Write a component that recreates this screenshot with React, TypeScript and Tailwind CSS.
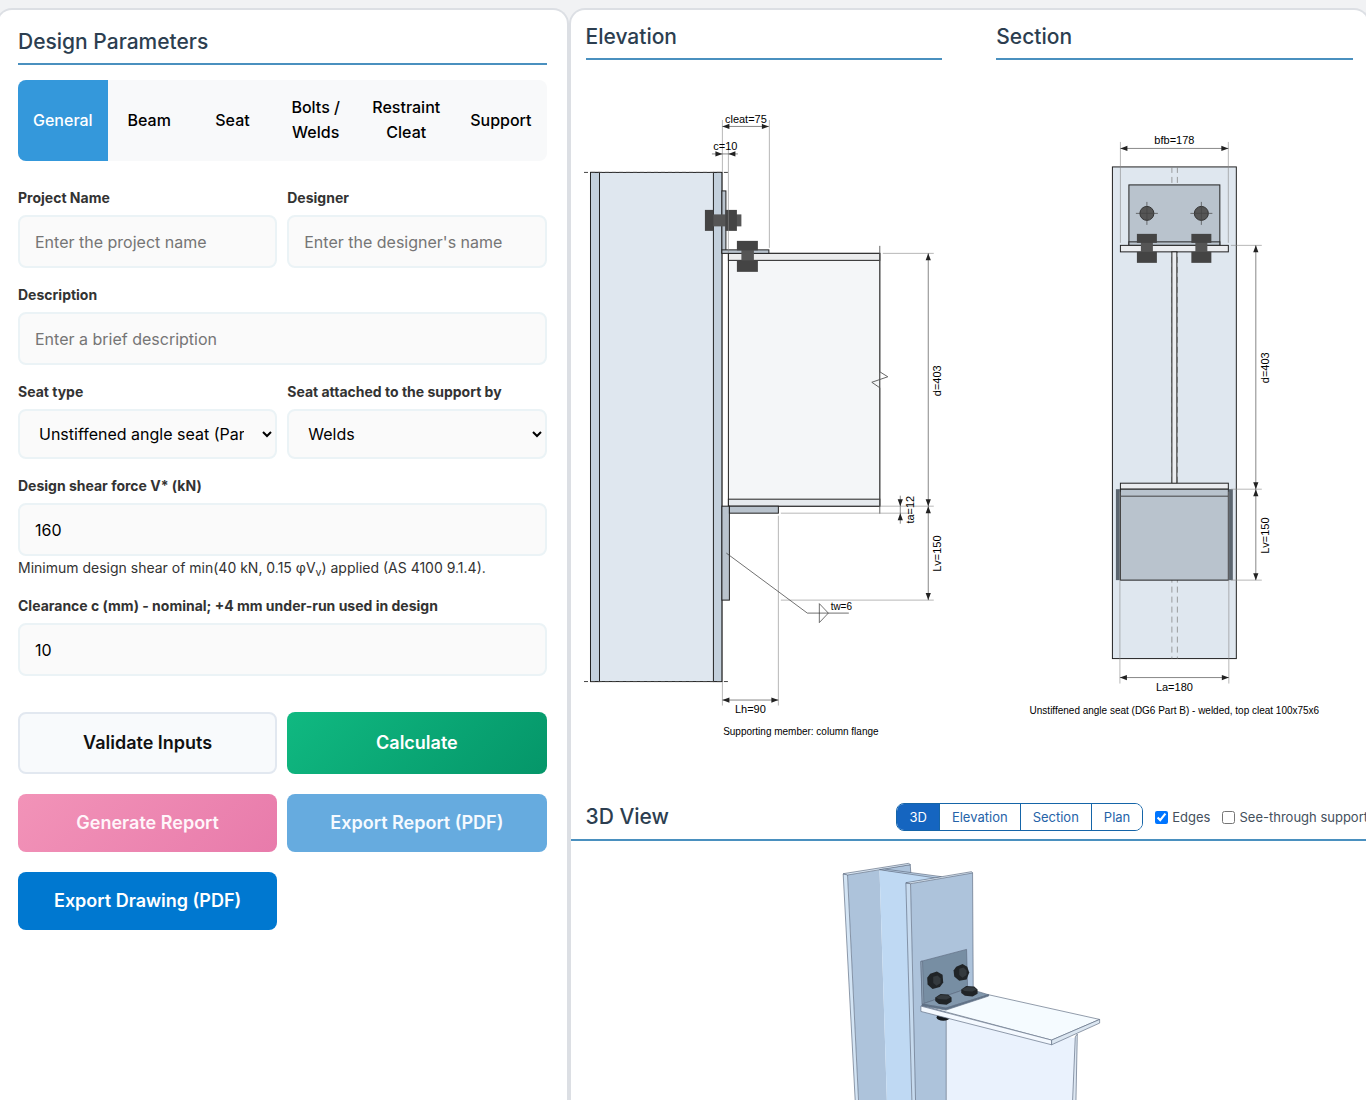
import React, { useState } from 'react';

type DimProps = {
  from: number;
  to: number;
  at: number;
  vertical?: boolean;
};

const tabs = ['General', 'Beam', 'Seat', 'Bolts / Welds', 'Restraint Cleat', 'Support'];
const views = ['3D', 'Elevation', 'Section', 'Plan'];

const inputClass =
  'w-full h-[53px] rounded-lg border-2 border-[#ebf3f6] bg-[#fafafa] px-[15px] text-base text-black placeholder:text-[#757575] outline-none';
const selectClass =
  'w-full h-[50px] rounded-lg border-2 border-[#ebf3f6] bg-[#fafafa] px-[15px] text-base text-black outline-none';
const buttonClass = 'rounded-lg px-4 py-[15px] text-lg leading-7 font-semibold';

// Dimension line with inward filled arrow heads
const Dim: React.FC<DimProps> = ({ from, to, at, vertical }) => (
  <g>
    {vertical ? (
      <>
        <path d={`M${at} ${from}V${to}`} stroke="#555" strokeWidth="0.7" />
        <path
          d={`M${at} ${from}l-2.6 7h5.2zM${at} ${to}l-2.6 -7h5.2z`}
          fill="#222"
        />
      </>
    ) : (
      <>
        <path d={`M${from} ${at}H${to}`} stroke="#555" strokeWidth="0.7" />
        <path
          d={`M${from} ${at}l7 -2.6v5.2zM${to} ${at}l-7 -2.6v5.2z`}
          fill="#222"
        />
      </>
    )}
  </g>
);

const Field: React.FC<{ id: string; label: string; className?: string; children: React.ReactNode }> = ({
  id,
  label,
  className,
  children
}) => (
  <div className={className}>
    <label htmlFor={id} className="mb-[7px] block text-sm leading-5 font-bold text-[#333]">
      {label}
    </label>
    {children}
  </div>
);

const ElevationDrawing: React.FC = () => (
  <svg
    viewBox="586 60 357 720"
    className="block w-full overflow-visible"
    fontFamily="'Liberation Sans', Arial, sans-serif"
    fontSize="11"
    textAnchor="middle"
    role="img"
    aria-label="Elevation"
  >
    {/* Column */}
    <g stroke="#222" strokeWidth="1">
      <rect x="590.5" y="172.5" width="131.5" height="509.5" fill="#dfe7ef" />
      <rect x="590.5" y="172.5" width="9" height="509.5" fill="#c3d0dc" />
      <rect x="713.5" y="172.5" width="8.5" height="509.5" fill="#c3d0dc" />
      <path d="M584 172.5H728M584 682H728" stroke="#444" strokeDasharray="4 3" fill="none" />
    </g>
    {/* Beam */}
    <g stroke="#222" strokeWidth="1">
      <rect x="728.5" y="253.5" width="151.5" height="253" fill="#f4f6f8" />
      <rect x="728.5" y="253.5" width="151.5" height="7" fill="#ebeced" />
      <rect x="728.5" y="499.5" width="151.5" height="7" fill="#e6eaee" />
    </g>
    <path d="M880 246V372L888 377L872 382.5L880 388V514" fill="none" stroke="#555" strokeWidth="0.9" />
    {/* Seat angle and top cleat */}
    <g stroke="#222" strokeWidth="1" fill="#b9c3cd">
      <rect x="722" y="506.5" width="7.5" height="94" />
      <rect x="729.5" y="506.5" width="49" height="7" />
      <rect x="722" y="191" width="4" height="62" />
      <rect x="722" y="250" width="47" height="3.5" />
    </g>
    <g fill="#444">
      <rect x="713" y="214.5" width="28.5" height="12" fill="#555" />
      <rect x="705" y="210" width="8.5" height="21" />
      <rect x="725.5" y="210" width="11.5" height="21" />
      <rect x="741.5" y="245" width="12.5" height="20" fill="#555" />
      <rect x="737" y="241" width="21" height="9.5" />
      <rect x="737" y="260.5" width="21" height="11.5" />
    </g>
    <g fill="none" stroke="#888" strokeWidth="0.6">
      <path d="M722.5 120V172M769.5 120V248M728.5 148V253" />
      <path d="M883 253.5H934M880 506.5H934M781 513.5H913M781 600.5H934" />
      <path d="M722.5 682V706M778.5 516V706" />
    </g>
    <Dim from={722.5} to={769} at={126.5} />
    <Dim from={722.5} to={778.5} at={700.5} />
    <Dim from={253.5} to={506.5} at={928.5} vertical />
    <Dim from={506.5} to={600.5} at={928.5} vertical />
    <path d="M712 154H738M900.5 496V524" stroke="#555" strokeWidth="0.7" />
    <path
      d="M722.5 154l-7 -2.6v5.2zM728.5 154l7 -2.6v5.2zM900.5 506.5l-2.6 -7h5.2zM900.5 513.5l-2.6 7h5.2z"
      fill="#222"
    />
    <path d="M726.5 553.5L807.5 613.5H849" fill="none" stroke="#333" strokeWidth="0.7" />
    <path d="M819.5 604L828.5 613.5L819.5 623Z" fill="none" stroke="#333" strokeWidth="0.7" />
    <text x="746" y="123">cleat=75</text>
    <text x="725.5" y="150">c=10</text>
    <text x="750.5" y="713">Lh=90</text>
    <text transform="translate(941 381) rotate(-90)">d=403</text>
    <text transform="translate(914 510) rotate(-90)">ta=12</text>
    <text transform="translate(941 554) rotate(-90)">Lv=150</text>
    <text x="841.5" y="610" fontSize="10">tw=6</text>
    <text x="801" y="735" fontSize="10">Supporting member: column flange</text>
  </svg>
);

const FlangeBolt: React.FC<{ x: number }> = ({ x }) => (
  <g fill="#444">
    <rect x={x - 6} y="238" width="12" height="20" fill="#555" />
    <rect x={x - 10} y="234" width="20" height="9" />
    <rect x={x - 10} y="252" width="20" height="11" />
    <circle cx={x} cy="213.5" r="7" fill="#555" stroke="#333" />
    <path d={`M${x - 11} 213.5H${x + 11}M${x} 202V225`} stroke="#444" strokeWidth="0.7" />
  </g>
);

const SectionDrawing: React.FC = () => (
  <svg
    viewBox="996 60 357 720"
    className="block w-full overflow-visible"
    fontFamily="'Liberation Sans', Arial, sans-serif"
    fontSize="11"
    textAnchor="middle"
    role="img"
    aria-label="Section"
  >
    <rect x="1112.5" y="167" width="124" height="492" fill="#dfe7ef" stroke="#222" />
    <path d="M1172 167V659M1177.5 167V659" stroke="#888" strokeWidth="0.8" strokeDasharray="6 4" />
    <g stroke="#222" strokeWidth="1">
      <rect x="1129" y="185" width="91" height="60" fill="#b9c3cd" />
      <rect x="1129" y="242" width="91" height="3.5" fill="#b9c3cd" />
      <rect x="1120.5" y="245.5" width="108" height="6.5" fill="#ebedf0" />
      <rect x="1172" y="252" width="5" height="232" fill="#ebedf0" />
      <rect x="1120.5" y="483.5" width="108" height="6" fill="#ebedf0" />
      <rect x="1120.5" y="489.5" width="108" height="91" fill="#b9c3cd" />
      <path d="M1120.5 496.5H1228.5" stroke="#444" />
    </g>
    <rect x="1116" y="489.5" width="4" height="91" fill="#5b656f" />
    <rect x="1229" y="489.5" width="4" height="91" fill="#5b656f" />
    <FlangeBolt x={1147} />
    <FlangeBolt x={1201.5} />
    <g fill="none" stroke="#888" strokeWidth="0.6">
      <path d="M1120.5 142V243M1228.5 142V243" />
      <path d="M1231 245.5H1262M1231 489.5H1262M1231 580.5H1262" />
      <path d="M1120 492V684M1229 492V684" />
    </g>
    <Dim from={1120.5} to={1228.5} at={148.5} />
    <Dim from={1120} to={1229} at={678} />
    <Dim from={245.5} to={489.5} at={1256} vertical />
    <Dim from={489.5} to={580.5} at={1256} vertical />
    <text x="1174.5" y="144">bfb=178</text>
    <text x="1174.5" y="691">La=180</text>
    <text transform="translate(1269 368) rotate(-90)">d=403</text>
    <text transform="translate(1269 536) rotate(-90)">Lv=150</text>
    <text x="1174.5" y="714" fontSize="10">
      Unstiffened angle seat (DG6 Part B) - welded, top cleat 100x75x6
    </text>
  </svg>
);

const ModelView: React.FC = () => (
  <svg viewBox="571 841 797 340" className="block w-full" role="img" aria-label="3D model">
    <g
      transform="translate(830 850) scale(0.3333)"
      stroke="#5d6b80"
      strokeWidth="2"
      strokeLinejoin="round"
    >
      {/* Column: back flange, web, front flange */}
      <path d="M148 58L240 44L242 70L200 70Z" fill="#adc3db" />
      <path d="M52 74L148 60L170 750L174 960H93L85 750Z" fill="#adc3db" stroke="none" />
      <path d="M39 72L52 74L85 750L93 960H83L75 750Z" fill="#d3e4f4" />
      <path d="M39 71L235 40L241 44L52 75Z" fill="#dbe8f5" />
      <path d="M148 60L325 84L228 100L250 960H174L170 750Z" fill="#bfd9f3" stroke="none" />
      <path d="M148 59L162 57L334 80L318 84Z" fill="#b9cfe6" />
      <path d="M241 101L427 68L429 425L348 480V960H260Z" fill="#adc3db" stroke="none" />
      <path d="M427 68L429 425" fill="none" />
      <path d="M227 99L241 101L256 750L260 960H250L245 750Z" fill="#c6daee" />
      <path d="M227 98L424 65L427 69L241 101Z" fill="#dbe8f5" />
      {/* Beam */}
      <path d="M348 500L742 565L736 750V960H348Z" fill="#eaf2fd" stroke="none" />
      <path d="M348 504V960" fill="none" />
      <path d="M735 560L741 552L737 750V960H727V750Z" fill="#dde7f2" />
      <ellipse cx="339" cy="502" rx="20" ry="10" fill="#15191d" stroke="none" />
      <path d="M274 466L475 434L808 508L664 570Z" fill="#f5fbff" />
      <path d="M272 468L664 570V584L272 484Z" fill="#f4f9ff" />
      <path d="M664 570L808 508V519L664 584Z" fill="#dbe6f1" />
      {/* Top cleat */}
      <path d="M272 334L409 298L412 415L276 462Z" fill="#778ea3" />
      <path d="M276 462L412 415L475 434L347 474Z" fill="#8298ad" />
      <path d="M276 462L347 474L475 434V438L347 480L276 467Z" fill="#5f7489" />
      <path d="M272 334L277 333L281 461L276 462Z" fill="#94a9bd" />
    </g>
    <g transform="translate(830 850) scale(0.3333)" fill="#202427">
      <path d="M300 371L320 364L337 374L339 397L329 411L307 417L292 403L291 383Z" />
      <path d="M309 380l13 -4l9 9v14l-12 8l-10 -8z" fill="#343a3e" />
      <path d="M378 350L397 342L411 350L417 367L409 388L387 392L372 379L370 361Z" />
      <path d="M387 356l13 -4l9 9v14l-12 8l-10 -8z" fill="#343a3e" />
      <path d="M315 442L331 432L354 433L364 442V455L349 464L326 462L315 453Z" />
      <path d="M317 442l15 -7l22 1l8 6l-14 6l-23 -1z" fill="#343a3e" />
      <path d="M393 418L408 408L432 409L442 418V431L427 439L404 437L393 429Z" />
      <path d="M395 418l15 -7l22 1l8 6l-14 6l-23 -1z" fill="#343a3e" />
    </g>
  </svg>
);

const App: React.FC = () => {
  const [activeTab, setActiveTab] = useState('General');
  const [activeView, setActiveView] = useState('3D');

  return (
    <div className="h-screen overflow-hidden bg-[#f1f2f4] pt-2 font-[Inter,sans-serif]">
      <div className="-mx-1 grid h-full grid-cols-[5fr_7fr]">
        <section className="min-w-0 rounded-t-2xl border-2 border-b-0 border-[#dcdfe4] bg-white px-5 pt-[17px]">
          <h2 className="border-b-2 border-[#4a90bf] pb-[7px] text-[21px] leading-[29px] font-medium text-[#2c3e50]">
            Design Parameters
          </h2>

          <div className="mt-[15px] flex overflow-hidden rounded-lg bg-[#f8f9fa]" role="tablist">
            {tabs.map((tab) => (
              <button
                key={tab}
                type="button"
                role="tab"
                aria-selected={activeTab === tab}
                onClick={() => setActiveTab(tab)}
                className={`flex-1 px-[15px] pt-[15px] pb-4 text-base leading-[25px] font-medium ${
                  activeTab === tab ? 'bg-[#3498db] text-white' : 'text-black'
                }`}
              >
                {tab}
              </button>
            ))}
          </div>

          <form className="mt-[27px]" onSubmit={(e) => e.preventDefault()}>
            <div className="grid grid-cols-2 gap-x-[10px] gap-y-[17px]">
              <Field id="project" label="Project Name">
                <input id="project" className={inputClass} placeholder="Enter the project name" />
              </Field>
              <Field id="designer" label="Designer">
                <input id="designer" className={inputClass} placeholder="Enter the designer's name" />
              </Field>
              <Field id="description" label="Description" className="col-span-2">
                <input id="description" className={inputClass} placeholder="Enter a brief description" />
              </Field>
              <Field id="seat-type" label="Seat type">
                <select id="seat-type" className={selectClass}>
                  <option>Unstiffened angle seat (Part B)</option>
                </select>
              </Field>
              <Field id="attached" label="Seat attached to the support by">
                <select id="attached" className={selectClass}>
                  <option>Welds</option>
                  <option>Bolts</option>
                </select>
              </Field>
              <Field id="shear" label="Design shear force V* (kN)" className="col-span-2">
                <input id="shear" className={inputClass} defaultValue="160" />
                <p className="h-[23px] text-sm leading-6 text-[#333]">
                  Minimum design shear of min(40 kN, 0.15 φV<sub>v</sub>) applied (AS 4100 9.1.4).
                </p>
              </Field>
              <Field id="clearance" label="Clearance c (mm) - nominal; +4 mm under-run used in design" className="col-span-2">
                <input id="clearance" className={inputClass} defaultValue="10" />
              </Field>
            </div>

            <div className="mt-9 grid grid-cols-2 gap-x-[10px] gap-y-5">
              <button type="button" className={`${buttonClass} border-2 border-[#e2e8f0] bg-[#f8fafc] text-[#111]`}>
                Validate Inputs
              </button>
              <button type="submit" className={`${buttonClass} bg-linear-135 from-[#10b981] to-[#059669] text-white`}>
                Calculate
              </button>
              <button type="button" className={`${buttonClass} bg-linear-135 from-[#f293b8] to-[#e87bab] text-[#fff5fa]`}>
                Generate Report
              </button>
              <button type="button" className={`${buttonClass} bg-[#66abdf] text-[#f5faff]`}>
                Export Report (PDF)
              </button>
              <button type="button" className={`${buttonClass} bg-[#0078d0] text-white`}>
                Export Drawing (PDF)
              </button>
            </div>
          </form>
        </section>

        <section className="min-w-0 rounded-t-2xl border-2 border-b-0 border-[#dcdfe4] bg-white pt-[13px]">
          <div className="grid grid-cols-2 gap-x-[54px] px-[15px]">
            <div>
              <h2 className="border-b-2 border-[#4a90bf] pb-[7px] text-[21px] leading-7 font-medium text-[#2c3e50]">
                Elevation
              </h2>
              <ElevationDrawing />
            </div>
            <div>
              <h2 className="border-b-2 border-[#4a90bf] pb-[7px] text-[21px] leading-7 font-medium text-[#2c3e50]">
                Section
              </h2>
              <SectionDrawing />
            </div>
          </div>

          <div className="mt-6 flex items-center border-b-2 border-[#4a90bf] pb-2 pl-[15px] whitespace-nowrap">
            <h2 className="mr-auto text-[21px] leading-7 font-medium text-[#2c3e50]">3D View</h2>
            <div className="mr-3 flex divide-x divide-[#1565a8] overflow-hidden rounded-lg border border-[#1565a8]">
              {views.map((view) => (
                <button
                  key={view}
                  type="button"
                  onClick={() => setActiveView(view)}
                  className={`px-3 py-1 text-[13px] leading-[18px] ${
                    activeView === view ? 'bg-[#1565c0] text-white' : 'bg-white text-[#2563a8]'
                  }`}
                >
                  {view}
                </button>
              ))}
            </div>
            <label className="mr-3 flex items-center gap-1 text-[13px] text-[#44505c]">
              <input type="checkbox" defaultChecked />
              Edges
            </label>
            <label className="flex items-center gap-1 text-[13px] text-[#44505c]">
              <input type="checkbox" />
              See-through support
            </label>
          </div>
          <ModelView />
        </section>
      </div>
    </div>
  );
};

export default App;
